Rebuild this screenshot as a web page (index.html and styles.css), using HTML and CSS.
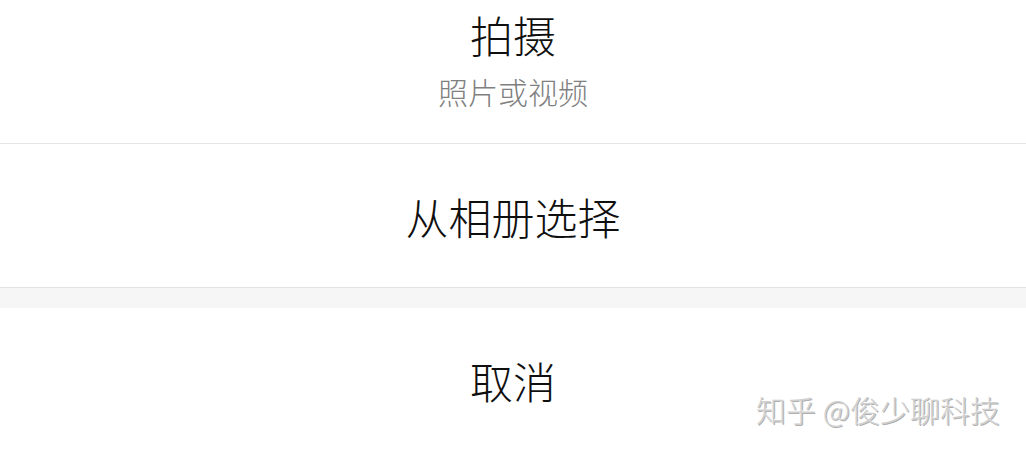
FILE: index.html
```html
<!DOCTYPE html>
<html lang="zh-CN">
<head>
<meta charset="utf-8">
<title>拍摄</title>
<link rel="stylesheet" href="styles.css">
</head>
<body>
<div class="sheet">
  <div class="item item-first">
    <div class="title">拍摄</div>
    <div class="subtitle">照片或视频</div>
  </div>
  <div class="item item-second">
    <div class="title">从相册选择</div>
  </div>
  <div class="gap"></div>
  <div class="item item-cancel">
    <div class="title">取消</div>
  </div>
  <div class="watermark">知乎 @俊少聊科技</div>
</div>
</body>
</html>
```
FILE: styles.css
```css
html, body {
  margin: 0;
  padding: 0;
  background: #ffffff;
}
body {
  font-family: "Noto Sans CJK SC", "Noto Sans", sans-serif;
  width: 1026px;
  height: 452px;
  overflow: hidden;
}
.sheet {
  position: relative;
  width: 1026px;
  height: 452px;
  display: flex;
  flex-direction: column;
}
.item {
  display: flex;
  flex-direction: column;
  align-items: center;
  background: #ffffff;
}
.item-first {
  height: 144px;
  padding-top: 9px;
  box-sizing: border-box;
  border-bottom: 1px solid #e6e6e6;
}
.item-second {
  height: 144px;
  box-sizing: border-box;
  justify-content: center;
  border-bottom: 1px solid #e3e3e3;
}
.gap {
  height: 20px;
  background: #f6f6f6;
}
.item-cancel {
  flex: 1;
  justify-content: center;
}
.title {
  font-size: 43px;
  line-height: 50px;
  font-weight: 300;
  color: #0f0f0f;
}
.item-first .subtitle {
  margin-top: 14px;
  font-size: 30px;
  line-height: 36px;
  font-weight: 300;
  color: #808080;
}
.watermark {
  position: absolute;
  right: 26px;
  top: 391px;
  font-size: 30px;
  line-height: 36px;
  font-weight: 300;
  color: #d0d0d0;
  text-shadow: -1px -1px 0 #ffffff, 1px 1px 0 #b0b0b0;
  white-space: nowrap;
}
```
